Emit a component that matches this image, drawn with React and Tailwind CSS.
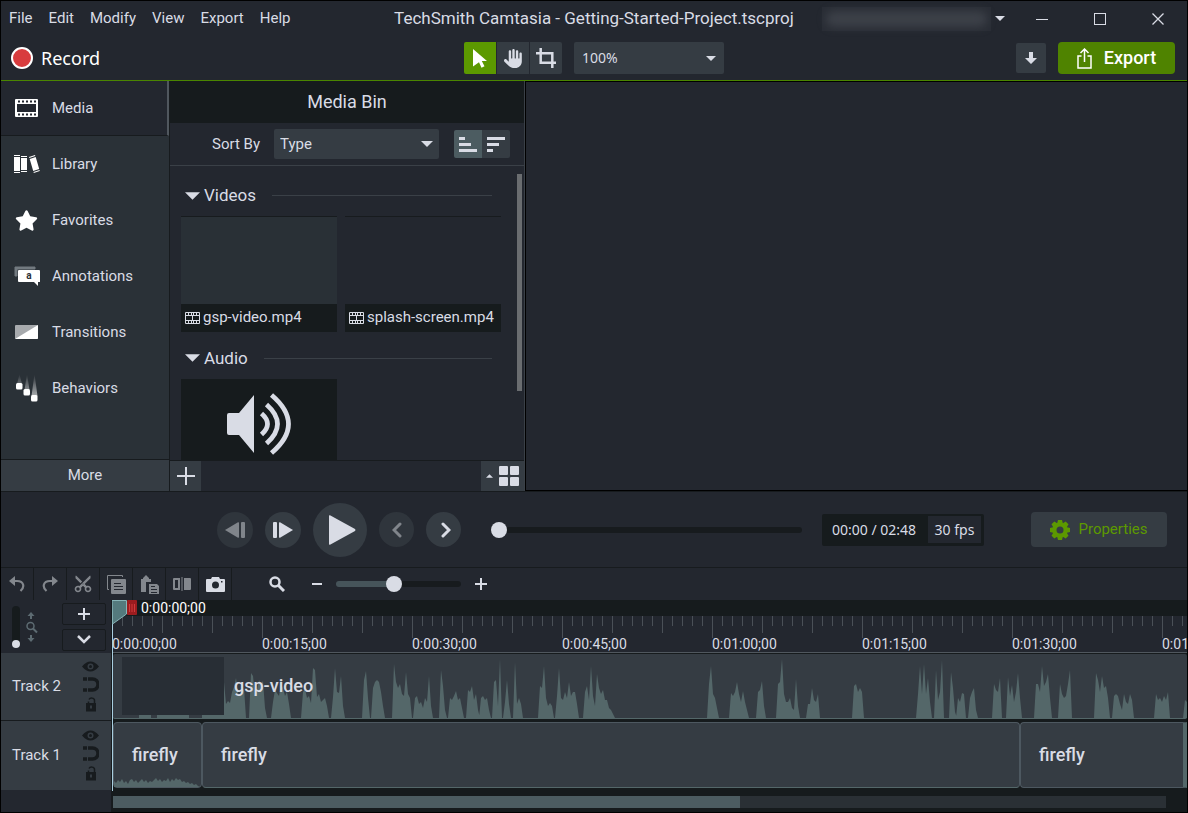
import { FaStar } from 'react-icons/fa';
import { FaHand } from 'react-icons/fa6';
import { MdContentCut } from 'react-icons/md';

const MENUS = ['File', 'Edit', 'Modify', 'View', 'Export', 'Help'];

const TIMES = ['0:00:00;00', '0:00:15;00', '0:00:30;00', '0:00:45;00', '0:01:00;00', '0:01:15;00', '0:01:30;00', '0:01:45;00'];

// [start x, heights sampled every 2px]
const VIDEO_WAVE = [
  [26, [3, 3, 3, 3, 3, 3, 3]],
  [44, [3, 3, 3, 3, 3, 3, 3, 3, 3, 3, 3, 3, 3, 3, 3, 3, 3]],
  [89, [3, 3, 3, 3, 3, 3, 3, 3, 3, 3, 3, 3]],
  [111, [36, 14, 17, 15, 26, 31, 40, 25, 22, 24, 30, 0]],
  [136, [0, 45, 42, 22, 27, 38, 34, 37, 10, 0]],
  [158, [0, 16, 28, 25, 22, 34, 30, 22, 26, 14, 0]],
  [188, [0, 26, 29, 20, 22, 15, 50, 48, 21, 24, 16, 18, 20, 12, 0]],
  [218, [0, 21, 50, 26, 25, 42, 12, 0]],
  [249, [0, 38, 47, 20, 0]],
  [258, [0, 30, 36, 38, 36, 26, 12, 0]],
  [279, [0, 54, 36, 30, 34, 24, 22, 46, 24, 20, 0]],
  [300, [0, 20, 22, 14, 16, 10, 20, 16, 42, 12, 0]],
  [326, [0, 48, 32, 8, 0]],
  [335, [0, 20, 18, 22, 27, 18, 20, 10, 0]],
  [353, [0, 28, 26, 32, 18, 24, 8, 0]],
  [366, [0, 20, 22, 18, 20, 8, 0]],
  [379, [0, 36, 38, 12, 59, 0]],
  [390, [0, 16, 38, 14, 0]],
  [400, [0, 56, 14, 20, 14, 0]],
  [425, [0, 32, 30, 52, 20, 12, 15, 12, 0]],
  [442, [0, 22, 50, 20, 18, 26, 20, 36, 22, 26, 26, 14, 0]],
  [470, [0, 26, 32, 18, 52, 22, 12, 44, 30, 24, 28, 18, 18, 10, 8, 4, 0]],
  [594, [0, 34, 52, 24, 20, 10, 0]],
  [616, [0, 25, 22, 26, 36, 24, 16, 27, 16, 8, 0]],
  [643, [0, 26, 28, 37, 12, 0]],
  [663, [0, 34, 36, 59, 24, 16, 16, 20, 10, 8, 39, 12, 0]],
  [693, [0, 14, 14, 30, 18, 16, 24, 0]],
  [739, [0, 32, 34, 26, 30, 26, 0]],
  [803, [0, 24, 52, 24, 54, 24, 40, 16, 0]],
  [821, [0, 48, 18, 26, 58, 0]],
  [836, [0, 46, 30, 6, 0]],
  [843, [0, 20, 16, 25, 24, 0]],
  [855, [0, 20, 26, 30, 8, 0]],
  [879, [0, 34, 28, 26, 40, 0]],
  [893, [0, 41, 22, 33, 16, 26, 45, 20, 0]],
  [921, [0, 34, 34, 26, 52, 32, 36, 44, 20, 0]],
  [945, [0, 34, 24, 20, 22, 34, 48, 0]],
  [981, [0, 45, 38, 26, 42, 30, 32, 20, 0]],
  [999, [0, 22, 24, 22, 14, 8, 24, 16, 14, 24, 18, 0]],
  [1041, [0, 24, 18, 20, 16, 22, 18, 26, 0]],
  [1070, [0, 18, 16, 24]],
];

const FIREFLY_WAVE = [
  [0, [6, 4, 7, 5, 8, 4, 6, 3, 7, 8, 5, 7, 4, 6, 8, 5, 7, 4, 6, 5, 7, 9, 6, 8, 5, 7, 6, 9, 5, 8, 6, 9, 7, 8, 5, 6, 4, 5, 3, 4, 2, 3, 1, 0]],
];

function wavePath(wave, base) {
  return wave
    .map(([start, heights]) => {
      const points = heights.map((h, i) => `L${start + i * 2} ${base - h}`).join('');
      return `M${start} ${base}${points}L${start + (heights.length - 1) * 2} ${base}Z`;
    })
    .join('');
}

function Caret({ className }) {
  return (
    <svg viewBox="0 0 14 7" className={className} fill="currentColor">
      <path d="M0 0h14L7 7z" />
    </svg>
  );
}

function FilmIcon({ className }) {
  return (
    <svg viewBox="0 0 23 18" className={className} fill="currentColor" fillRule="evenodd">
      <path d="M1 0h21q1 0 1 1v16q0 1-1 1H1q-1 0-1-1V1q0-1 1-1zM2 5v8h19V5zM3 1.500v2h2v-2zM7 1.500v2h2v-2zM11 1.500v2h2v-2zM15 1.500v2h2v-2zM19 1.500v2h2v-2zM3 14.500v2h2v-2zM7 14.500v2h2v-2zM11 14.500v2h2v-2zM15 14.500v2h2v-2zM19 14.500v2h2v-2z" />
    </svg>
  );
}

function ClipIcon() {
  return (
    <svg viewBox="0 0 15 12" className="h-3 w-[15px] shrink-0" fill="currentColor" fillRule="evenodd">
      <path d="M1 0h13q1 0 1 1v10q0 1-1 1H1q-1 0-1-1V1q0-1 1-1zM1 4v4h6V4zM8 4v4h6V4zM1 1v2h2V1zM4 1v2h2V1zM7 1v2h1V1zM9 1v2h2V1zM12 1v2h2V1zM1 9v2h2V9zM4 9v2h2V9zM7 9v2h1V9zM9 9v2h2V9zM12 9v2h2V9z" />
    </svg>
  );
}

function LibraryIcon() {
  return (
    <svg viewBox="0 0 26 20" className="h-5 w-[26px]" fill="currentColor">
      <path d="M0 1h6v1H0zM0 3h6v14H0zM0 18h6v1H0zM7 2h6v1H7zM7 4h6v12H7zM7 17h6v1H7z" />
      <path d="M15 3l6-2 .3 1-6 2zM15.700 5l6-2 3.500 12-6 2zM19.500 18l6-2 .3 1-6 2z" />
    </svg>
  );
}

function AnnotationIcon() {
  return (
    <svg viewBox="0 0 26 20" className="h-5 w-[26px]">
      <path d="M1 10V1h20v2H3v7z" fill="#737a80" stroke="#737a80" />
      <path d="M5 4h20q1 0 1 1v11h-2v4l-4-4H5q-1 0-1-1V5q0-1 1-1z" fill="#fff" />
      <text x="15" y="13" textAnchor="middle" fontSize="10" fontWeight="700" fill="#2a3137">a</text>
    </svg>
  );
}

function TransitionIcon() {
  return (
    <svg viewBox="0 0 23 14" className="h-3.5 w-[23px]">
      <rect width="23" height="14" rx="1" fill="#a7aaad" />
      <path d="M23 0v13q0 1-1 1H0z" fill="#fff" />
    </svg>
  );
}

function BehaviorIcon() {
  return (
    <svg viewBox="0 0 22 28" className="h-7 w-[22px]">
      <defs>
        <linearGradient id="trail" x1="0" y1="0" x2="0" y2="1">
          <stop offset="0" stopColor="#fff" stopOpacity="0" />
          <stop offset="1" stopColor="#fff" stopOpacity=".6" />
        </linearGradient>
      </defs>
      <path d="M3.500 0l2.500 10H1zM11 0l2.500 16h-5zM18.500 0l3 22h-6z" fill="url(#trail)" />
      <g fill="#fff">
        <rect x="0" y="9" width="6.500" height="6.500" rx="1.500" />
        <rect x="7.500" y="15" width="6.500" height="6.500" rx="1.500" />
        <rect x="15" y="21" width="6.500" height="6.500" rx="1.500" />
      </g>
    </svg>
  );
}

const TABS = [
  { name: 'Library', icon: <LibraryIcon /> },
  { name: 'Favorites', icon: <FaStar className="size-[23px]" /> },
  { name: 'Annotations', icon: <AnnotationIcon /> },
  { name: 'Transitions', icon: <TransitionIcon /> },
  { name: 'Behaviors', icon: <BehaviorIcon /> },
];

function TitleBar() {
  return (
    <div className="grid h-[35px] grid-cols-[1fr_auto_1fr] items-center">
      <nav className="flex gap-4 pl-2 text-[15px]">
        {MENUS.map((menu) => (
          <button key={menu} type="button">{menu}</button>
        ))}
      </nav>
      <h1 className="text-[17px]">TechSmith Camtasia - Getting-Started-Project.tscproj</h1>
      <div className="flex items-center justify-end">
        <div className="h-6 w-[169px] bg-[#292d35] p-1">
          <div className="h-full rounded-full bg-[#3c4048] blur-xs" />
        </div>
        <button type="button" aria-label="Account" className="pr-2 pl-1">
          <Caret className="h-[5px] w-2.5" />
        </button>
        <button type="button" aria-label="Minimize" className="flex w-[58px] justify-center">
          <svg viewBox="0 0 12 12" className="size-3" stroke="currentColor"><path d="M0 6.500h12" /></svg>
        </button>
        <button type="button" aria-label="Maximize" className="flex w-[58px] justify-center">
          <svg viewBox="0 0 12 12" className="size-3" fill="none" stroke="currentColor"><rect x=".5" y=".5" width="11" height="11" /></svg>
        </button>
        <button type="button" aria-label="Close" className="flex w-[58px] justify-center">
          <svg viewBox="0 0 12 12" className="size-3" stroke="currentColor" strokeWidth="1.300"><path d="M.5.5l11 11M11.500.5l-11 11" /></svg>
        </button>
      </div>
    </div>
  );
}

function Toolbar() {
  return (
    <div className="grid h-[45px] grid-cols-[1fr_auto_1fr] items-center border-b border-[#4a8500]">
      <button type="button" className="flex items-center gap-2 justify-self-start pl-2.5 font-['Noto_Sans',sans-serif] text-lg text-white">
        <span className="size-[22px] rounded-full border-2 border-white bg-[#d83c3e]" />
        Record
      </button>
      <div className="flex gap-3">
        <div className="flex gap-px">
          <button type="button" aria-label="Select" className="flex size-8 items-center justify-center rounded-l-xs bg-[#5c9900]">
            <svg viewBox="0 0 14 19" className="h-[19px] w-3.5" fill="#fff"><path d="M0 0l14 12H8.800l2.700 5.300-3 1.400L6 13.300 0 17.500z" /></svg>
          </button>
          <button type="button" aria-label="Pan" className="flex size-8 items-center justify-center bg-[#353c43]">
            <FaHand className="size-[19px]" />
          </button>
          <button type="button" aria-label="Crop" className="flex size-8 items-center justify-center rounded-r-xs bg-[#353c43]">
            <svg viewBox="0 0 20 20" className="size-5" fill="none" stroke="currentColor" strokeWidth="2.500"><path d="M0 5.200h16.300V20M4.700 0v14.800H20" /></svg>
          </button>
        </div>
        <div className="relative">
          <select aria-label="Canvas zoom" className="h-8 w-[150px] appearance-none rounded-xs bg-[#353c43] pl-2 font-['Noto_Sans',sans-serif] text-sm">
            <option>100%</option>
          </select>
          <Caret className="pointer-events-none absolute top-3.5 right-2 h-[5px] w-2.5" />
        </div>
      </div>
      <div className="flex items-center justify-end gap-3 pr-3">
        <button type="button" aria-label="Download" className="flex size-[30px] items-center justify-center rounded-xs bg-[#353c43]">
          <svg viewBox="0 0 12 12" className="size-3" fill="currentColor"><path d="M4 0h4v6h4l-6 6-6-6h4z" /></svg>
        </button>
        <button type="button" className="flex h-8 w-[117px] items-center justify-center gap-3 rounded-sm bg-[#4f8300] text-lg font-medium text-white">
          <svg viewBox="0 0 15 21" className="h-[21px] w-[15px]" fill="none" stroke="currentColor" strokeWidth="1.500">
            <path d="M4.500 8H1v12h13V8h-3.500M7.500 14V1M3.500 5l4-4 4 4" />
          </svg>
          Export
        </button>
      </div>
    </div>
  );
}

function Sidebar() {
  return (
    <div className="flex w-[169px] shrink-0 flex-col border-r border-[#171b1e] bg-[#2a3137] text-[15px]">
      <button type="button" className="flex h-[55px] items-center border-r-2 border-b border-r-[#50575e] border-b-[#171b1e] bg-[#23272f]">
        <span className="flex w-[51px] justify-center text-white"><FilmIcon className="h-[18px] w-[23px]" /></span>
        Media
      </button>
      {TABS.map((tab) => (
        <button key={tab.name} type="button" className="flex h-14 items-center">
          <span className="flex w-[51px] justify-center text-white">{tab.icon}</span>
          {tab.name}
        </button>
      ))}
      <button type="button" className="mt-auto h-8 border-t border-[#171b1e] bg-[#353c43]">More</button>
    </div>
  );
}

function GroupHeader({ title }) {
  return (
    <button type="button" className="flex w-full items-center pr-[9px] pl-1 text-[17px]">
      <Caret className="mr-1 h-2 w-[15px]" />
      {title}
      <span className="ml-4 h-px flex-1 bg-[#3a4047]" />
    </button>
  );
}

function MediaBin() {
  return (
    <section className="flex w-[355px] shrink-0 flex-col border-r border-[#3a4047]">
      <h2 className="flex h-[42px] shrink-0 items-center justify-center bg-[#161b1d] text-lg">Media Bin</h2>
      <div className="flex h-[43px] shrink-0 items-center justify-end border-b border-[#3a4047] pr-3.5">
        <label htmlFor="sort" className="mr-3.5 text-[15px]">Sort By</label>
        <div className="relative mr-[15px]">
          <select id="sort" className="h-[30px] w-[165px] appearance-none rounded-xs bg-[#353c43] pl-1.5 text-[15px]">
            <option>Type</option>
          </select>
          <Caret className="pointer-events-none absolute top-3 right-1.5 h-1.5 w-3" />
        </div>
        <button type="button" aria-label="Ascending" className="flex size-7 items-center justify-center rounded-l-xs bg-[#4c5c61]">
          <svg viewBox="0 0 18 15" className="h-[15px] w-[18px]" fill="currentColor"><path d="M0 0h6v3H0zM0 6h12v3H0zM0 12h18v3H0z" /></svg>
        </button>
        <button type="button" aria-label="Descending" className="flex size-7 items-center justify-center rounded-r-xs bg-[#353c43]">
          <svg viewBox="0 0 18 15" className="h-[15px] w-[18px]" fill="currentColor"><path d="M0 0h18v3H0zM0 6h12v3H0zM0 12h6v3H0z" /></svg>
        </button>
      </div>
      <div className="flex min-h-0 flex-1 pr-0.5">
        <div className="flex-1 overflow-hidden pt-[17px] pr-4 pl-[11px]">
          <GroupHeader title="Videos" />
          <div className="mt-[7px] mb-3.5 grid grid-cols-[156px_156px] gap-2 text-[15px]">
            <figure className="border-t border-[#171b1e] bg-[#293036]">
              <div className="h-[87px]" />
              <figcaption className="flex h-7 items-center gap-[3px] bg-[#161b1d] pl-1">
                <ClipIcon />
                gsp-video.mp4
              </figcaption>
            </figure>
            <figure className="border-t border-[#171b1e]">
              <div className="h-[87px]" />
              <figcaption className="flex h-7 items-center gap-[3px] bg-[#161b1d] pl-1">
                <ClipIcon />
                splash-screen.mp4
              </figcaption>
            </figure>
          </div>
          <GroupHeader title="Audio" />
          <div className="mt-2 flex h-[116px] w-[156px] justify-center bg-[#161b1d] pt-3.5">
            <svg viewBox="0 0 65 62" className="h-[62px] w-[65px]" fill="none" stroke="currentColor">
              <path d="M2 20h10L27 2v58L12 42H2q-2 0-2-2V22q0-2 2-2z" fill="currentColor" stroke="none" />
              <path d="M34.500 20.500q12 10.500 0 21M39.500 11.500q22 19.500 0 39M44.500 2q34 29 0 58" strokeWidth="4.800" />
            </svg>
          </div>
        </div>
        <div className="mt-2 h-[217px] w-[5px] bg-[#6a6d70]" />
      </div>
      <div className="flex h-[31px] shrink-0 justify-between border-t border-[#171b1e]">
        <button type="button" aria-label="Import media" className="flex w-[31px] items-center justify-center bg-[#353c43]">
          <svg viewBox="0 0 18 18" className="size-[18px]" stroke="currentColor" strokeWidth="2"><path d="M9 0v18M0 9h18" /></svg>
        </button>
        <button type="button" aria-label="View options" className="flex w-[43px] items-center justify-center gap-1.5 bg-[#353c43]">
          <Caret className="h-1 w-[7px] rotate-180" />
          <svg viewBox="0 0 20 20" className="size-5" fill="currentColor">
            <rect width="9" height="9" rx="1" />
            <rect x="11" width="9" height="9" rx="1" />
            <rect y="11" width="9" height="9" rx="1" />
            <rect x="11" y="11" width="9" height="9" rx="1" />
          </svg>
        </button>
      </div>
    </section>
  );
}

function PlaybackBar() {
  return (
    <div className="flex h-[77px] shrink-0 items-center border-y border-[#171b1e] pr-5 pl-[216px]">
      <div className="flex items-center gap-3">
        <button type="button" aria-label="Previous frame" disabled className="flex size-9 items-center justify-center rounded-full bg-[#2f353c] text-[#80858b]">
          <svg viewBox="0 0 20 16" className="h-4 w-5" fill="currentColor">
            <path d="M0 8L13 .3q1-.3 1 .7v14q0 1-1 .7z" />
            <rect x="16" width="4" height="16" rx="1" />
          </svg>
        </button>
        <button type="button" aria-label="Next frame" className="flex size-9 items-center justify-center rounded-full bg-[#353c43]">
          <svg viewBox="0 0 20 16" className="h-4 w-5" fill="currentColor">
            <path d="M20 8L7 .3Q6 0 6 1v14q0 1 1 .7z" />
            <rect width="4" height="16" rx="1" />
          </svg>
        </button>
        <button type="button" aria-label="Play" className="flex size-[54px] items-center justify-center rounded-full bg-[#353c43] pl-1">
          <svg viewBox="0 0 27 30" className="h-[30px] w-[27px]" fill="currentColor"><path d="M0 1q0-1 1-.7L26 14q1 1 0 2L1 29.700Q0 30 0 29z" /></svg>
        </button>
        <button type="button" aria-label="Previous marker" disabled className="flex size-[35px] items-center justify-center rounded-full bg-[#2f353c] text-[#80858b]">
          <svg viewBox="0 0 10 16" className="h-4 w-2.5" fill="none" stroke="currentColor" strokeWidth="3" strokeLinecap="round"><path d="M8 2L2 8l6 6" /></svg>
        </button>
        <button type="button" aria-label="Next marker" className="flex size-[35px] items-center justify-center rounded-full bg-[#353c43]">
          <svg viewBox="0 0 10 16" className="ml-1 h-4 w-2.5" fill="none" stroke="currentColor" strokeWidth="3" strokeLinecap="round"><path d="M2 2l6 6-6 6" /></svg>
        </button>
      </div>
      <input
        type="range"
        aria-label="Playback position"
        defaultValue="0"
        className="mr-5 ml-[30px] h-4 min-w-0 flex-1 appearance-none bg-transparent [&::-webkit-slider-runnable-track]:h-1.5 [&::-webkit-slider-runnable-track]:rounded-full [&::-webkit-slider-runnable-track]:bg-[#171b1e] [&::-webkit-slider-thumb]:-mt-[5px] [&::-webkit-slider-thumb]:size-4 [&::-webkit-slider-thumb]:appearance-none [&::-webkit-slider-thumb]:rounded-full [&::-webkit-slider-thumb]:bg-[#d9dce5]"
      />
      <div className="flex h-8 w-[162px] items-center justify-between rounded-xs bg-[#161b1d] pr-[3px] pl-2.5 font-['Noto_Sans',sans-serif] text-sm">
        <span>00:00&nbsp;/&nbsp;02:48</span>
        <span className="flex h-[27px] w-[53px] items-center justify-center bg-[#23272f]">30 fps</span>
      </div>
      <button type="button" className="ml-[47px] flex h-[35px] w-[136px] items-center justify-center gap-2 rounded-sm bg-[#353c43] text-[15px] text-[#5c9900]">
        <svg viewBox="-10 -10 20 20" className="size-5">
          <g fill="currentColor">
            <circle r="7.500" />
            <path d="M-2-10h4l1 4v12l-1 4h-4l-1-4V-6z" />
            <path d="M-2-10h4l1 4v12l-1 4h-4l-1-4V-6z" transform="rotate(45)" />
            <path d="M-2-10h4l1 4v12l-1 4h-4l-1-4V-6z" transform="rotate(90)" />
            <path d="M-2-10h4l1 4v12l-1 4h-4l-1-4V-6z" transform="rotate(135)" />
          </g>
          <circle r="3.500" fill="#353c43" />
        </svg>
        Properties
      </button>
    </div>
  );
}

function EditButton({ label, children }) {
  return (
    <button type="button" aria-label={label} className="flex w-[33px] items-center justify-center border-r border-[#171b1e] text-[#83878d]">
      {children}
    </button>
  );
}

function EditBar() {
  return (
    <div className="flex h-8 shrink-0">
      <EditButton label="Undo">
        <svg viewBox="0 0 16 16" className="size-4" fill="none" stroke="currentColor" strokeWidth="2.200"><path d="M5 5h3c7 0 8 6 3.500 10" /><path d="M0 5l6-5v10z" fill="currentColor" stroke="none" /></svg>
      </EditButton>
      <EditButton label="Redo">
        <svg viewBox="0 0 16 16" className="size-4" fill="none" stroke="currentColor" strokeWidth="2.200"><path d="M11 5H8C1 5 0 11 4.500 15" /><path d="M16 5l-6-5v10z" fill="currentColor" stroke="none" /></svg>
      </EditButton>
      <EditButton label="Cut"><MdContentCut className="size-5 -rotate-90" /></EditButton>
      <EditButton label="Copy">
        <svg viewBox="0 0 19 19" className="size-[19px]" fill="currentColor" fillRule="evenodd">
          <path d="M1 15q-1 0-1-1V1q0-1 1-1h14q1 0 1 1v1H15V1H1v13h1v1z" />
          <path d="M5 4h13q1 0 1 1v13q0 1-1 1H5q-1 0-1-1V5q0-1 1-1zM7 8v1h7V8zM7 11v1h9v-1zM7 14v1h9v-1z" />
        </svg>
      </EditButton>
      <EditButton label="Paste">
        <svg viewBox="0 0 19 19" className="size-[19px]" fill="currentColor" fillRule="evenodd">
          <path d="M1 4h2V3l3-3 3 3v1h2v3H6v10H1z" />
          <path d="M9 9h8l2 2v8H9zM11 11v1h4v-1zM11 14v1h6v-1zM11 17v1h6v-1z" />
        </svg>
      </EditButton>
      <EditButton label="Split">
        <svg viewBox="0 0 18 14" className="h-3.5 w-[18px]" fill="currentColor" fillRule="evenodd">
          <path d="M1 1h6v12H1q-1 0-1-1V2q0-1 1-1zM2 3v8h3V3zM8.500 0h1v14h-1zM11 1h6q1 0 1 1v10q0 1-1 1h-6z" />
        </svg>
      </EditButton>
      <button type="button" aria-label="Snapshot" className="flex w-[33px] items-center justify-center border-r border-[#171b1e]">
        <svg viewBox="0 0 19 15" className="h-[15px] w-[19px]" fill="currentColor" fillRule="evenodd">
          <path d="M1 2h4l1-2h7l1 2h4q1 0 1 1v11q0 1-1 1H1q-1 0-1-1V3q0-1 1-1zM9.500 4.500a3.500 3.500 0 100 7 3.500 3.500 0 000-7zM15 4v1.500h1.500V4z" />
        </svg>
      </button>
      <div className="ml-[37px] flex items-center">
        <svg viewBox="0 0 16 16" className="size-4" fill="none" stroke="currentColor"><circle cx="6" cy="6" r="4.500" strokeWidth="2.500" /><path d="M9.500 9.500L15 15" strokeWidth="3" /></svg>
        <button type="button" aria-label="Zoom out" className="ml-[26px]">
          <svg viewBox="0 0 12 12" className="size-3" stroke="currentColor" strokeWidth="2"><path d="M1 6h10" /></svg>
        </button>
        <input
          type="range"
          aria-label="Timeline zoom"
          defaultValue="46"
          className="mr-3.5 ml-[13px] h-4 w-[125px] appearance-none bg-transparent [&::-webkit-slider-runnable-track]:h-1.5 [&::-webkit-slider-runnable-track]:rounded-full [&::-webkit-slider-runnable-track]:bg-[linear-gradient(to_right,#46545a_46%,#171b1e_46%)] [&::-webkit-slider-thumb]:-mt-[5px] [&::-webkit-slider-thumb]:size-4 [&::-webkit-slider-thumb]:appearance-none [&::-webkit-slider-thumb]:rounded-full [&::-webkit-slider-thumb]:bg-[#d9dce5]"
        />
        <button type="button" aria-label="Zoom in">
          <svg viewBox="0 0 12 12" className="size-3" stroke="currentColor" strokeWidth="2"><path d="M0 6h12M6 0v12" /></svg>
        </button>
      </div>
    </div>
  );
}

function TrackHeader({ name }) {
  return (
    <div className="flex flex-1 items-center justify-between bg-[#353c43] pr-3 pl-[11px] text-[15px]">
      {name}
      <div className="flex flex-col items-center gap-[5px] text-[#171b1e]">
        <button type="button" aria-label={`Hide ${name}`}>
          <svg viewBox="0 0 17 11" className="h-[11px] w-[17px]" fill="currentColor" fillRule="evenodd">
            <path d="M0 5.500Q8.500-4.500 17 5.500 8.500 15.500 0 5.500zM8.500 2.500a3 3 0 100 6 3 3 0 000-6z" />
            <circle cx="8.500" cy="5.500" r="1.500" />
          </svg>
        </button>
        <button type="button" aria-label={`Magnet ${name}`}>
          <svg viewBox="0 0 16 15" className="h-[15px] w-4" fill="none" stroke="currentColor" strokeWidth="3.500">
            <path d="M0 2h4M5 2h4.500a5 5 0 010 11H5M0 13h4" />
          </svg>
        </button>
        <button type="button" aria-label={`Lock ${name}`}>
          <svg viewBox="0 0 12 15" className="h-[15px] w-3" fill="currentColor" fillRule="evenodd">
            <path d="M1 6h10v8.500H1zM5 8.500v3h2v-3z" />
            <path d="M3.500 6V4.500m6 1.500V3.500c0-3-4.500-3-5.500-1" fill="none" stroke="currentColor" strokeWidth="1.500" />
          </svg>
        </button>
      </div>
    </div>
  );
}

function Ruler() {
  return (
    <div className="bg-[#23272f]">
      <svg className="block h-5 w-full overflow-visible" stroke="#4a5057">
        {Array.from({ length: 400 }, (_, i) => (
          <line key={i} x1={i * 10 + 0.5} x2={i * 10 + 0.5} y1="0" y2={i % 15 === 0 ? 22 : i % 5 === 0 ? 17 : 10} />
        ))}
      </svg>
      <div className="flex h-4 text-sm leading-4">
        {TIMES.map((time) => (
          <span key={time} className="w-[150px] shrink-0">{time}</span>
        ))}
      </div>
    </div>
  );
}

function Timeline() {
  return (
    <div className="flex shrink-0 overflow-hidden bg-[#161b1d]">
      <div className="flex w-[111px] shrink-0 flex-col border-r border-[#171b1e] bg-[#23272f]">
        <div className="flex h-[53px] items-center pl-[11px]">
          <input
            type="range"
            aria-label="Track height"
            defaultValue="0"
            className="h-[42px] w-2 appearance-none rounded-full bg-[#161b1d] [direction:rtl] [writing-mode:vertical-lr] [&::-webkit-slider-thumb]:size-2 [&::-webkit-slider-thumb]:appearance-none [&::-webkit-slider-thumb]:rounded-full [&::-webkit-slider-thumb]:bg-[#d9dce5]"
          />
          <svg viewBox="0 0 12 30" className="ml-1.5 h-[30px] w-3" fill="#5d6b72">
            <path d="M5 0l3.500 4H6v3H4V4H1.500zM5 30l3.500-4H6v-3H4v3H1.500z" />
            <circle cx="4.500" cy="14" r="3.500" fill="none" stroke="#5d6b72" strokeWidth="1.500" />
            <path d="M7 16.500l4 4" stroke="#5d6b72" strokeWidth="2" />
          </svg>
          <div className="ml-auto flex flex-col gap-1 pr-[5px]">
            <button type="button" aria-label="Add track" className="flex h-[22px] w-11 items-center justify-center rounded-xs border border-[#171b1e]">
              <svg viewBox="0 0 12 12" className="size-3" stroke="currentColor" strokeWidth="2"><path d="M0 6h12M6 0v12" /></svg>
            </button>
            <button type="button" aria-label="Collapse tracks" className="flex h-[22px] w-11 items-center justify-center rounded-xs border border-[#171b1e]">
              <svg viewBox="0 0 14 9" className="h-[9px] w-3.5" fill="none" stroke="currentColor" strokeWidth="2.500"><path d="M1 1l6 6 6-6" /></svg>
            </button>
          </div>
        </div>
        <div className="flex h-[68px] border-b border-[#171b1e]"><TrackHeader name="Track 2" /></div>
        <div className="flex h-[69px]"><TrackHeader name="Track 1" /></div>
      </div>

      <div className="relative min-w-0 flex-1">
        <div className="h-4 pl-[29px] text-sm leading-4 text-white">0:00:00;00</div>
        <Ruler />
        <div className="h-[68px] overflow-hidden border-t border-[#50575e] pt-px pl-px">
          <div className="relative flex h-[65px] items-center rounded-xs border-b border-[#546769] bg-[#353c43]">
            <svg viewBox="0 0 1080 64" className="absolute top-0 left-0 h-16 w-[1080px] max-w-none" fill="#546769">
              <rect x="9" y="3" width="102" height="58" fill="#282e35" />
              <path d={wavePath(VIDEO_WAVE, 64)} />
            </svg>
            <span className="relative pl-[121px] text-lg font-medium">gsp-video</span>
          </div>
        </div>
        <div className="mt-0.5 flex h-[66px] pl-px text-lg font-medium">
          <div className="relative flex w-[89px] shrink-0 items-center rounded-sm border border-[#4d5860] bg-[#353c43] pl-[18px]">
            <svg viewBox="0 0 88 10" className="absolute bottom-0 left-0 h-2.5 w-[88px]" fill="#546769">
              <path d={wavePath(FIREFLY_WAVE, 10)} />
            </svg>
            <span className="relative">firefly</span>
          </div>
          <div className="flex w-[818px] shrink-0 items-center rounded-sm border border-[#4d5860] border-b-[#546769] bg-[#353c43] pl-[18px]">firefly</div>
          <div className="flex min-w-0 flex-1 items-center rounded-l-sm border border-r-4 border-[#4d5860] border-r-[#546769] bg-[#353c43] pl-[18px]">firefly</div>
        </div>
        <div className="mt-2 mr-[21px] mb-1 ml-px h-3 bg-[#2a3035]">
          <div className="h-full w-[627px] bg-[#4c5c61]" />
        </div>
        {/* Playhead */}
        <svg viewBox="0 0 26 191" className="absolute top-0 left-0 h-[191px] w-[26px]">
          <path d="M.5 0v191" stroke="#a9cfe0" />
          <path d="M0 .5h14.500V14L.5 24z" fill="#547a7d" stroke="#88b5b8" />
          <rect x="15" y="0" width="10" height="15" rx="1" fill="#9b1c1f" />
          <path d="M17.500 4v8M20 4v8M22.500 4v8" stroke="#d0393b" />
        </svg>
      </div>
    </div>
  );
}

export default function App() {
  return (
    <div className="flex h-screen min-h-[640px] flex-col border border-black bg-[#23272f] font-[Roboto,sans-serif] text-[#d9dce5]">
      <TitleBar />
      <Toolbar />
      <main className="flex min-h-0 flex-1">
        <Sidebar />
        <MediaBin />
        <div className="flex-1 border border-r-0 border-black" />
      </main>
      <PlaybackBar />
      <EditBar />
      <Timeline />
    </div>
  );
}
